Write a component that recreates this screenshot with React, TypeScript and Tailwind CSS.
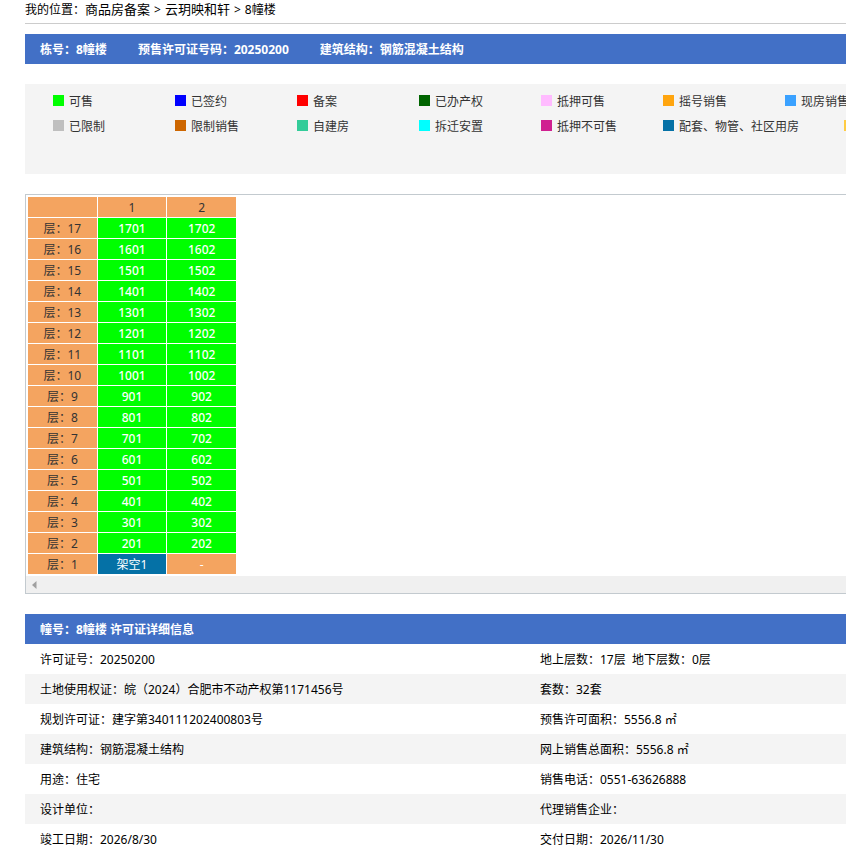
import React from "react";

type LegendItem = { label: string; color: string; wide?: boolean };

const legendRows: LegendItem[][] = [
    [
        { label: "可售", color: "bg-[#00ff00]" },
        { label: "已签约", color: "bg-[#0000ff]" },
        { label: "备案", color: "bg-[#ff0000]" },
        { label: "已办产权", color: "bg-[#006400]" },
        { label: "抵押可售", color: "bg-[#ffbbff]" },
        { label: "摇号销售", color: "bg-[#ffa50f]" },
        { label: "现房销售", color: "bg-[#3aa1ff]" },
    ],
    [
        { label: "已限制", color: "bg-[#bfbfbf]" },
        { label: "限制销售", color: "bg-[#cd6600]" },
        { label: "自建房", color: "bg-[#33cc99]" },
        { label: "拆迁安置", color: "bg-[#00ffff]" },
        { label: "抵押不可售", color: "bg-[#d02090]" },
        { label: "配套、物管、社区用房", color: "bg-[#0571a6]", wide: true },
        { label: "", color: "bg-[#ffcc44]" },
    ],
];

const floors = Array.from({ length: 16 }, (_, i) => 17 - i);

const details = [
    ["许可证号：20250200", "地上层数：17层\u00a0 地下层数：0层"],
    ["土地使用权证：皖（2024）合肥市不动产权第1171456号", "套数：32套"],
    ["规划许可证：建字第340111202400803号", "预售许可面积：5556.8 ㎡"],
    ["建筑结构：钢筋混凝土结构", "网上销售总面积：5556.8 ㎡"],
    ["用途：住宅", "销售电话：0551-63626888"],
    ["设计单位：", "代理销售企业："],
    ["竣工日期：2026/8/30", "交付日期：2026/11/30"],
];

const Breadcrumb: React.FC = () => (
    <nav className="flex h-6 items-baseline gap-1 border-b border-[#cccccc] leading-[18px] text-black">
        <div>
            我的位置：<a href="#" className="text-[13px]">商品房备案</a>
        </div>
        <span>&gt;</span>
        <a href="#" className="text-[13px]">云玥映和轩</a>
        <span>&gt;</span>
        <span>8幢楼</span>
    </nav>
);

const Legend: React.FC = () => (
    <div className="mt-5 h-[90px] overflow-hidden bg-[#f4f4f4] pt-1 pl-7 text-[#333333]">
        {legendRows.map((row, i) => (
            <ul key={i} className="flex h-[25px] items-center">
                {row.map((item) => (
                    <li key={item.color} className={`flex shrink-0 items-center gap-[5px] whitespace-nowrap ${item.wide ? "w-[181px]" : "w-[122px]"}`}>
                        <span className={`size-[11px] ${item.color}`} />
                        <span className="pt-0.5">{item.label}</span>
                    </li>
                ))}
            </ul>
        ))}
    </div>
);

const UnitTable: React.FC = () => (
    <div className="mt-5 border border-r-0 border-[#c3cacf]">
        <div className="p-px">
            <table className="w-[210px] table-fixed border-separate border-spacing-px text-center leading-[18px] text-[#333333]">
                <thead>
                    <tr className="h-5 bg-[#f4a460]">
                        <th className="p-0"></th>
                        <th className="p-0 pt-0.5 font-normal">1</th>
                        <th className="p-0 pt-0.5 font-normal">2</th>
                    </tr>
                </thead>
                <tbody>
                    {floors.map((floor) => (
                        <tr key={floor}>
                            <th className="bg-[#f4a460] p-0 pt-0.5 font-normal">层：{floor}</th>
                            {["01", "02"].map((unit) => (
                                <td key={unit} className="bg-[#00ff00] p-0 pt-0.5 font-medium text-white">
                                    <a href="#">{floor}{unit}</a>
                                </td>
                            ))}
                        </tr>
                    ))}
                    <tr>
                        <th className="bg-[#f4a460] p-0 pt-0.5 font-normal">层：1</th>
                        <td className="bg-[#0571a6] p-0 pt-0.5 text-white"><a href="#">架空1</a></td>
                        <td className="bg-[#f4a460] p-0 pt-0.5 text-white">-</td>
                    </tr>
                </tbody>
            </table>
        </div>
        {/* horizontal scroll track */}
        <div className="flex h-[17px] items-center bg-[#f0f0f0] pl-1.5">
            <button type="button" aria-label="向左滚动">
                <svg width="5" height="8" viewBox="0 0 5 8" className="block">
                    <path d="M4.5 0v8L0 4z" fill="#a0a0a0" />
                </svg>
            </button>
        </div>
    </div>
);

const App: React.FC = () => {
    return (
        <main className="bg-white pl-[25px] font-['Noto_Sans','Noto_Sans_CJK_SC',sans-serif] text-[12px]">
            <Breadcrumb />
            <h1 className="mt-2.5 flex h-[30px] items-center gap-[31px] bg-[#4270c6] px-[15px] pt-0.5 font-bold text-white">
                <span>栋号：8幢楼</span>
                <span>预售许可证号码：20250200</span>
                <span>建筑结构：钢筋混凝土结构</span>
            </h1>
            <Legend />
            <UnitTable />
            <h2 className="mt-5 flex h-[30px] items-center bg-[#4270c6] px-[15px] pt-0.5 font-bold text-white">
                幢号：8幢楼 许可证详细信息
            </h2>
            <table className="w-full table-fixed text-black">
                <tbody>
                    {details.map(([left, right]) => (
                        <tr key={left} className="h-[30px] even:bg-[#f4f4f4]">
                            <td className="w-[500px] p-0 pt-0.5 pl-[15px]">{left}</td>
                            <td className="p-0 pt-0.5 pl-[15px] whitespace-nowrap">{right}</td>
                        </tr>
                    ))}
                </tbody>
            </table>
        </main>
    );
};

export default App;
